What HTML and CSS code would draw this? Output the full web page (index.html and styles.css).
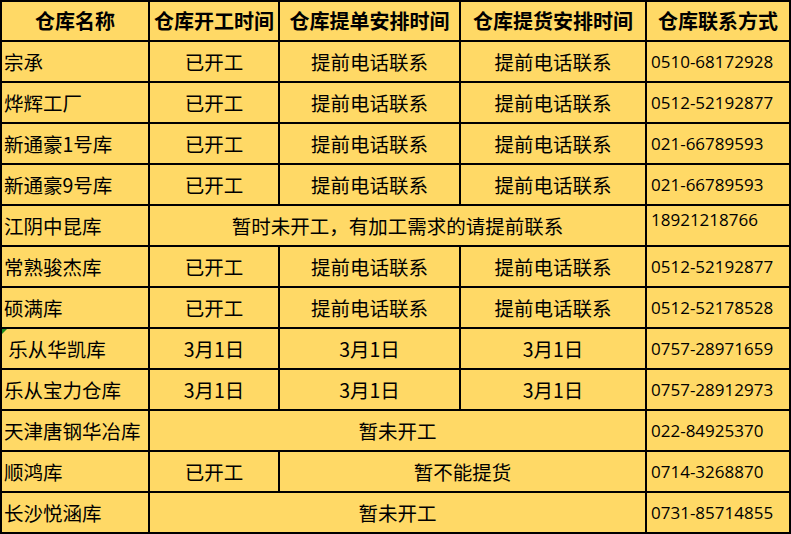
FILE: index.html
```html
<!DOCTYPE html>
<html lang="zh-CN">
<head>
<meta charset="utf-8">
<title>仓库开工时间</title>
<link rel="stylesheet" href="styles.css">
</head>
<body>
<table class="sheet">
  <tbody>
    <tr class="head">
      <th class="c1">仓库名称</th><th class="c2">仓库开工时间</th><th class="c3">仓库提单安排时间</th><th class="c4">仓库提货安排时间</th><th class="c5">仓库联系方式</th>
    </tr>
    <tr><td class="name">宗承</td><td>已开工</td><td>提前电话联系</td><td>提前电话联系</td><td class="tel">0510-68172928</td></tr>
    <tr><td class="name">烨辉工厂</td><td>已开工</td><td>提前电话联系</td><td>提前电话联系</td><td class="tel">0512-52192877</td></tr>
    <tr><td class="name">新通豪1号库</td><td>已开工</td><td>提前电话联系</td><td>提前电话联系</td><td class="tel">021-66789593</td></tr>
    <tr><td class="name">新通豪9号库</td><td>已开工</td><td>提前电话联系</td><td>提前电话联系</td><td class="tel">021-66789593</td></tr>
    <tr><td class="name">江阴中昆库</td><td colspan="3">暂时未开工，有加工需求的请提前联系</td><td class="tel top">18921218766</td></tr>
    <tr><td class="name">常熟骏杰库</td><td>已开工</td><td>提前电话联系</td><td>提前电话联系</td><td class="tel">0512-52192877</td></tr>
    <tr><td class="name">硕满库</td><td>已开工</td><td>提前电话联系</td><td>提前电话联系</td><td class="tel">0512-52178528</td></tr>
    <tr><td class="name flag">&nbsp;乐从华凯库</td><td class="date">3月1日</td><td class="date">3月1日</td><td class="date">3月1日</td><td class="tel">0757-28971659</td></tr>
    <tr><td class="name">乐从宝力仓库</td><td class="date">3月1日</td><td class="date">3月1日</td><td class="date">3月1日</td><td class="tel">0757-28912973</td></tr>
    <tr><td class="name">天津唐钢华冶库</td><td colspan="3">暂未开工</td><td class="tel">022-84925370</td></tr>
    <tr><td class="name">顺鸿库</td><td>已开工</td><td colspan="2">暂不能提货</td><td class="tel">0714-3268870</td></tr>
    <tr><td class="name">长沙悦涵库</td><td colspan="3">暂未开工</td><td class="tel">0731-85714855</td></tr>
  </tbody>
</table>
</body>
</html>
```

FILE: styles.css
```css
html, body {
  margin: 0;
  padding: 0;
  background: #ffd966;
}

.sheet {
  width: 791px;
  border-collapse: separate;
  border-spacing: 0;
  border-top: 2px solid #000;
  border-left: 2px solid #000;
  table-layout: fixed;
  background: #ffd966;
  font-family: "Noto Sans CJK SC", "Noto Sans", sans-serif;
  color: #000;
}

.sheet th,
.sheet td {
  border-right: 2px solid #000;
  border-bottom: 2px solid #000;
  height: 41px;
  box-sizing: border-box;
  padding: 0;
  text-align: center;
  vertical-align: middle;
  white-space: nowrap;
  overflow: hidden;
  font-size: 19.5px;
  line-height: 22px;
}

.sheet th {
  height: 40px;
  font-weight: bold;
  font-size: 20px;
}

.sheet th.c1 { width: 148px; }
.sheet th.c2 { width: 130px; }
.sheet th.c3 { width: 181px; }
.sheet th.c4 { width: 186px; }
.sheet th.c5 { width: 144px; }

.sheet td.name {
  text-align: left;
  padding-left: 2px;
}

.sheet td.tel {
  text-align: left;
  padding-left: 4px;
  font-family: "Open Sans", "Noto Sans", sans-serif;
  font-size: 17px;
}

.sheet td.top {
  vertical-align: top;
  padding-top: 3px;
}

.sheet td.flag {
  position: relative;
}

.sheet td.flag::before {
  content: "";
  position: absolute;
  left: 0;
  top: 0;
  width: 0;
  height: 0;
  border-top: 5px solid #1e8a1e;
  border-right: 5px solid transparent;
}
```
